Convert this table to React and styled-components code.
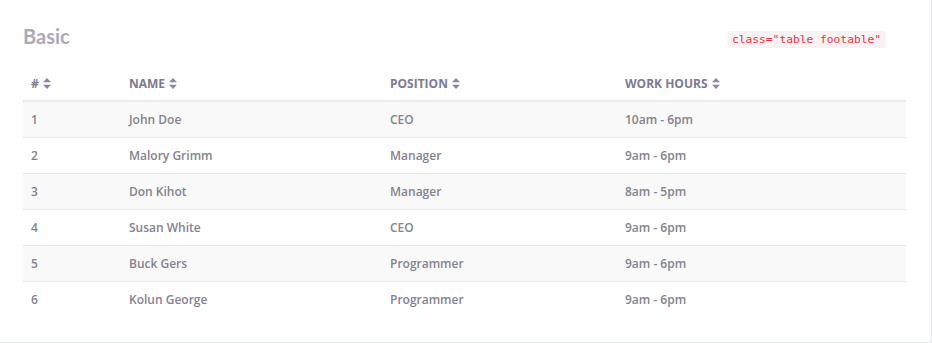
import React from "react";
import styled, { createGlobalStyle } from "styled-components";

const rows = [
  { id: 1, name: "John Doe", position: "CEO", hours: "10am - 6pm" },
  { id: 2, name: "Malory Grimm", position: "Manager", hours: "9am - 6pm" },
  { id: 3, name: "Don Kihot", position: "Manager", hours: "8am - 5pm" },
  { id: 4, name: "Susan White", position: "CEO", hours: "9am - 6pm" },
  { id: 5, name: "Buck Gers", position: "Programmer", hours: "9am - 6pm" },
  { id: 6, name: "Kolun George", position: "Programmer", hours: "9am - 6pm" },
];

const columns = [
  { label: "#", width: 98 },
  { label: "Name", width: 261 },
  { label: "Position", width: 235 },
  { label: "Work Hours" },
];

const SortIcon = () => (
  <StyledSortIcon viewBox="0 0 8 11" width="8" height="11">
    <path d="M4 0 L8 4.2 H0 Z" fill="currentColor" />
    <path d="M4 11 L8 6.8 H0 Z" fill="currentColor" />
  </StyledSortIcon>
);

export default function App() {
  return (
    <>
      <GlobalStyle />
      <StyledCard>
        <StyledHeader>
          <StyledTitle>Basic</StyledTitle>
          <StyledCode>class="table footable"</StyledCode>
        </StyledHeader>
        <StyledTable>
          <colgroup>
            {columns.map((col) => (
              <col key={col.label} style={col.width ? { width: col.width } : undefined} />
            ))}
          </colgroup>
          <thead>
            <tr>
              {columns.map((col) => (
                <StyledTh key={col.label}>
                  {col.label}
                  <SortIcon />
                </StyledTh>
              ))}
            </tr>
          </thead>
          <tbody>
            {rows.map((row, i) => (
              <StyledRow key={row.id} $striped={i % 2 === 0} $last={i === rows.length - 1}>
                <StyledTd>{row.id}</StyledTd>
                <StyledTd>{row.name}</StyledTd>
                <StyledTd>{row.position}</StyledTd>
                <StyledTd>{row.hours}</StyledTd>
              </StyledRow>
            ))}
          </tbody>
        </StyledTable>
      </StyledCard>
    </>
  );
}

const GlobalStyle = createGlobalStyle`
  html, body {
    margin: 0;
    padding: 0;
    background: #eef0f3;
  }
`;

const StyledCard = styled.div`
  box-sizing: border-box;
  width: 932px;
  height: 343px;
  background: #ffffff;
  border-right: 1px solid #e3e6ea;
  border-bottom: 1px solid #e3e6ea;
  border-bottom-right-radius: 3px;
  padding: 22px 25px 0 23px;
`;

const StyledHeader = styled.div`
  display: flex;
  align-items: center;
  justify-content: space-between;
  height: 32px;
  padding-right: 20px;
`;

const StyledTitle = styled.h4`
  margin: 0 0 4px;
  font-family: Lato, "Open Sans", sans-serif;
  font-weight: 700;
  font-size: 20px;
  color: #aba8bb;
`;

const StyledCode = styled.code`
  font-family: "DejaVu Sans Mono", "Liberation Mono", monospace;
  font-size: 11.25px;
  color: #f0303c;
  background: #f9f2f4;
  border-radius: 3px;
  padding: 2px 5px;
  margin-top: 2px;
`;

const StyledTable = styled.table`
  width: 100%;
  border-collapse: collapse;
  table-layout: fixed;
  margin-top: 11px;
  font-family: "Open Sans", sans-serif;
`;

const StyledTh = styled.th`
  text-align: left;
  height: 33px;
  padding: 2px 8px 0;
  font-size: 12px;
  font-weight: 700;
  text-transform: uppercase;
  color: #7c7a8f;
  border-bottom: 2px solid #ebebeb;
  white-space: nowrap;
`;

const StyledSortIcon = styled.svg`
  margin-left: 4px;
  vertical-align: -1px;
  color: #8a889b;
`;

const StyledRow = styled.tr`
  background: ${({ $striped }) => ($striped ? "#f9f9f9" : "#ffffff")};
  border-bottom: ${({ $last }) => ($last ? "none" : "1px solid #e7e7e7")};
`;

const StyledTd = styled.td`
  height: 35px;
  padding: 0 8px;
  font-size: 12px;
  font-weight: 600;
  color: #84828f;
`;
